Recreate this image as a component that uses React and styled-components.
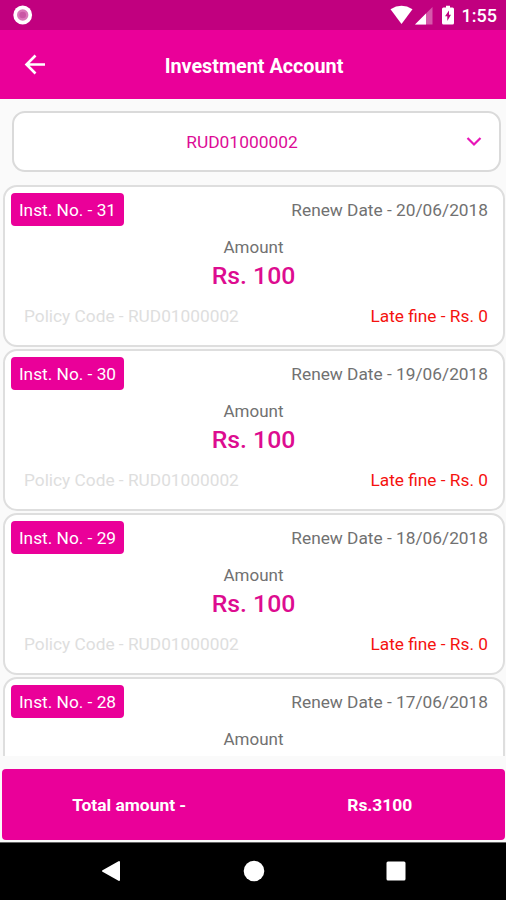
import React from "react"
import styled, { createGlobalStyle } from "styled-components"

const GlobalStyle = createGlobalStyle`
  * {
    box-sizing: border-box;
  }

  body {
    margin: 0;
    background: #fafafa;
    font-family: Roboto, "Liberation Sans", sans-serif;
  }
`

const Screen = styled.div`
  display: flex;
  flex-direction: column;
  width: 506px;
  height: 900px;
  overflow: hidden;
  background: #fafafa;
`

const StatusBar = styled.div`
  display: flex;
  align-items: center;
  justify-content: space-between;
  flex: none;
  height: 30px;
  padding: 0 9px 0 13px;
  background: #c1007f;
  color: #fff;
`

const StatusIcons = styled.div`
  display: flex;
  align-items: center;
  height: 30px;
`

const Clock = styled.span`
  padding-top: 2px;
  font-size: 18px;
  line-height: 20px;
  font-weight: 500;
`

const Header = styled.header`
  display: grid;
  grid-template-columns: 70px 1fr 70px;
  align-items: center;
  flex: none;
  height: 69px;
  padding-top: 1px;
  background: #ea0099;
  color: #fff;
`

const BackButton = styled.button`
  display: flex;
  justify-content: center;
  padding: 0;
  border: 0;
  background: none;
  color: inherit;
`

const Title = styled.h1`
  margin: 3px 0 0 2px;
  font-size: 19.8px;
  line-height: 24px;
  font-weight: 700;
  text-align: center;
  white-space: nowrap;
`

const AccountSelect = styled.div`
  display: grid;
  grid-template-columns: 50px 1fr 50px;
  align-items: center;
  flex: none;
  height: 61px;
  margin: 12px 5px 12px 12px;
  border: 2px solid #dadada;
  border-radius: 13px;
  background: #fff;
  color: #dd0c96;
`

const AccountCode = styled.span`
  grid-column: 2;
  padding: 1px 29px 0 0;
  font-size: 17.4px;
  text-align: center;
`

const Chevron = styled.svg`
  justify-self: end;
  margin-right: 17px;
`

const List = styled.main`
  display: flex;
  flex-direction: column;
  gap: 2px;
  flex: none;
  height: 571px;
  margin-top: 1px;
  padding: 0 1px 0 3px;
  overflow: hidden;
`

const Card = styled.article`
  flex: none;
  height: 162px;
  padding: 6px 15px 0 6px;
  border: 2px solid #dedede;
  border-radius: 14px;
  background: #fff;
`

const CardRow = styled.div`
  display: flex;
  align-items: center;
  justify-content: space-between;
`

const Badge = styled.span`
  width: 113px;
  height: 33px;
  border-radius: 4px;
  background: #ea0099;
  color: #fff;
  font-size: 17.3px;
  line-height: 34px;
  text-align: center;
  white-space: nowrap;
`

const RenewDate = styled.span`
  font-size: 17.3px;
  color: #717171;
`

const AmountBlock = styled.div`
  display: flex;
  flex-direction: column;
  align-items: center;
  padding: 11px 0 0 8px;
`

const AmountLabel = styled.span`
  font-size: 17px;
  line-height: 20px;
  color: #717171;
`

const AmountValue = styled.span`
  margin-top: 5px;
  font-size: 24.8px;
  line-height: 28px;
  font-weight: 500;
  color: #dd0c90;
`

const CardFooter = styled(CardRow)`
  padding: 16px 0 0 13px;
  font-size: 17.3px;
  line-height: 20px;
`

const PolicyCode = styled.span`
  color: #dedede;
`

const LateFine = styled.span`
  color: #f5120f;
`

const TotalBar = styled.footer`
  display: grid;
  grid-template-columns: 1fr 1fr;
  align-items: center;
  flex: none;
  height: 71px;
  margin: 13px 1px 2px 2px;
  padding-left: 2px;
  border-radius: 4px;
  background: #ea0099;
  color: #fff;
  font-size: 17.4px;
  font-weight: 700;
  text-align: center;
`

const NavBar = styled.nav`
  display: flex;
  align-items: center;
  justify-content: space-between;
  flex: 1;
  padding: 0 100px 1px 101px;
  border-top: 1px solid #666;
  background: #000;
`

const installments = [
  { number: 31, date: "20/06/2018", amount: 100, policy: "RUD01000002", fine: 0 },
  { number: 30, date: "19/06/2018", amount: 100, policy: "RUD01000002", fine: 0 },
  { number: 29, date: "18/06/2018", amount: 100, policy: "RUD01000002", fine: 0 },
  { number: 28, date: "17/06/2018" },
]

const Installment = ({ number, date, amount, policy, fine }) => (
  <Card>
    <CardRow>
      <Badge>Inst. No. - {number}</Badge>
      <RenewDate>Renew Date - {date}</RenewDate>
    </CardRow>
    <AmountBlock>
      <AmountLabel>Amount</AmountLabel>
      {amount && <AmountValue>Rs. {amount}</AmountValue>}
    </AmountBlock>
    {policy && (
      <CardFooter>
        <PolicyCode>Policy Code - {policy}</PolicyCode>
        <LateFine>Late fine - Rs. {fine}</LateFine>
      </CardFooter>
    )}
  </Card>
)

const App = () => {
  return (
    <Screen>
      <GlobalStyle />
      <StatusBar>
        <svg width="20" height="20" viewBox="0 0 20 20">
          <circle cx="9.7" cy="10" r="9.4" fill="#fff" />
          <circle cx="9.7" cy="10" r="5.7" fill="#da78b9" />
          <circle cx="9.7" cy="10" r="3.3" fill="#c957a4" />
        </svg>
        <StatusIcons>
          <svg width="73" height="30" viewBox="-1 0 73 30" fill="#fff">
            <path d="M0.5 9.2Q11.5 2.5 22.5 9.2L11.5 24Z" />
            <path d="M42.5 7V24.5H25Z" opacity=".35" />
            <path d="M36 13.5V24.5H25Z" />
            <path d="M53.5 7.5H56V5.8H60V7.5H62.5Q64 7.5 64 9V23Q64 24.5 62.5 24.5H53.5Q52 24.5 52 23V9Q52 7.5 53.5 7.5Z" />
            <path d="M59 10.5L55 16.3H57.3V21L61 14.8H59Z" fill="#c1007f" />
          </svg>
          <Clock>1:55</Clock>
        </StatusIcons>
      </StatusBar>
      <Header>
        <BackButton aria-label="Back">
          <svg
            width="22"
            height="22"
            viewBox="0 0 22 22"
            fill="none"
            stroke="#fff"
            strokeWidth="2.6"
          >
            <path d="M21 10.5H3M11.5 1.5L2.5 10.5L11.5 19.5" />
          </svg>
        </BackButton>
        <Title>Investment Account</Title>
      </Header>
      <AccountSelect>
        <AccountCode>RUD01000002</AccountCode>
        <Chevron width="16" height="10" viewBox="0 0 16 10" fill="none">
          <path d="M1.5 1L8 7.5L14.5 1" stroke="#e815b8" strokeWidth="2.2" />
        </Chevron>
      </AccountSelect>
      <List>
        {installments.map(item => (
          <Installment key={item.number} {...item} />
        ))}
      </List>
      <TotalBar>
        <span>Total amount -</span>
        <span>Rs.3100</span>
      </TotalBar>
      <NavBar>
        <svg width="20" height="22" viewBox="0 0 20 22">
          <path
            d="M18 2V20L2 11Z"
            fill="#fff"
            stroke="#fff"
            strokeWidth="2"
            strokeLinejoin="round"
          />
        </svg>
        <svg width="22" height="22" viewBox="0 0 22 22">
          <circle cx="11" cy="11" r="10.3" fill="#fff" />
        </svg>
        <svg width="20" height="20" viewBox="0 0 20 20">
          <rect x="0.5" y="0.5" width="19" height="19" rx="1.5" fill="#fff" />
        </svg>
      </NavBar>
    </Screen>
  )
}

export default App
